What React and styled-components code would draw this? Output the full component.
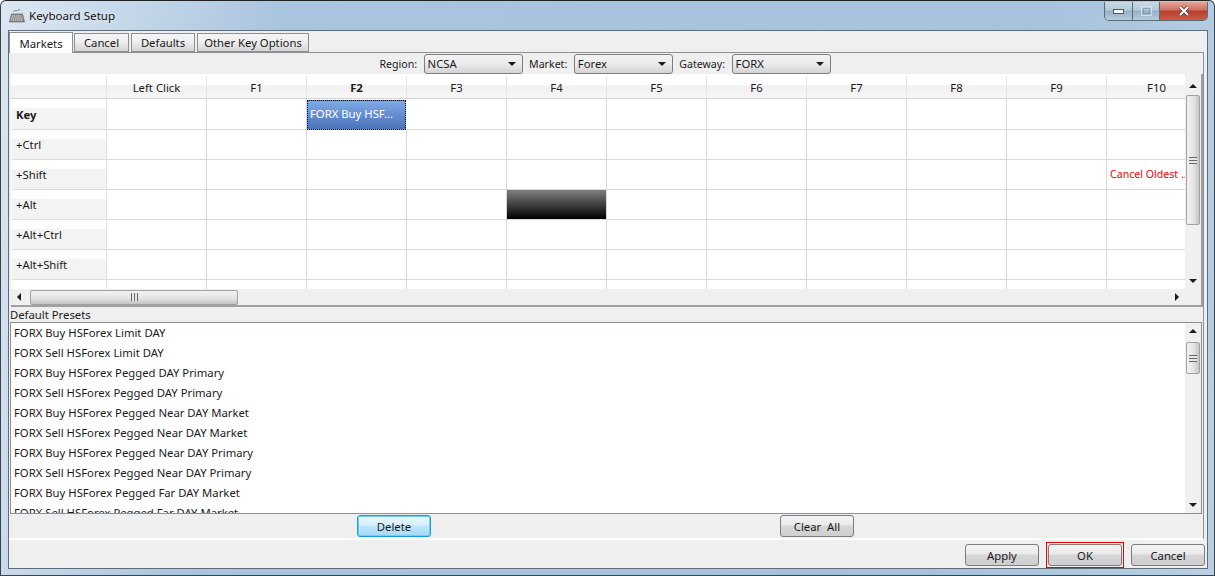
import React from 'react';
import styled, { createGlobalStyle } from 'styled-components';

const columns = ['Left Click', 'F1', 'F2', 'F3', 'F4', 'F5', 'F6', 'F7', 'F8', 'F9', 'F10'];
const rowKeys = ['Key', '+Ctrl', '+Shift', '+Alt', '+Alt+Ctrl', '+Alt+Shift', ''];
const presets = [
  'FORX Buy HSForex Limit DAY',
  'FORX Sell HSForex Limit DAY',
  'FORX Buy HSForex Pegged DAY Primary',
  'FORX Sell HSForex Pegged DAY Primary',
  'FORX Buy HSForex Pegged Near DAY Market',
  'FORX Sell HSForex Pegged Near DAY Market',
  'FORX Buy HSForex Pegged Near DAY Primary',
  'FORX Sell HSForex Pegged Near DAY Primary',
  'FORX Buy HSForex Pegged Far DAY Market',
  'FORX Sell HSForex Pegged Far DAY Market',
];

const GlobalStyle = createGlobalStyle`
  html, body {
    margin: 0;
    padding: 0;
    overflow: hidden;
    background: #fff;
  }
  * { box-sizing: border-box; }
`;

const Window = styled.div`
  width: 1215px;
  height: 576px;
  display: flex;
  flex-direction: column;
  overflow: hidden;
  padding: 0 6px 6px 7px;
  border: 1px solid #3c4248;
  border-top-color: #1e2226;
  border-radius: 6px 6px 0 0;
  background: linear-gradient(100deg, #dbe7f2 0, #a9c4de 22%, #a6c2dd 78%, #b9d0e5 100%);
  font-family: 'Noto Sans', 'Liberation Sans', sans-serif;
  font-size: 11.3px;
  color: #1a1a1a;
`;

const TitleBar = styled.div`
  height: 29px;
  flex: none;
  display: flex;
  align-items: flex-start;
  padding-left: 1px;
`;

const TitleIcon = styled.svg`
  width: 16px;
  height: 16px;
  margin: 7px 4px 0 0;
`;

const TitleText = styled.div`
  margin-top: 6px;
  font-size: 11.6px;
  line-height: 18px;
  color: #111;
  text-shadow: 0 0 6px #fff;
`;

const WindowControls = styled.div`
  margin-left: auto;
  height: 19px;
  margin-top: 1px;
  display: flex;
  border: 1px solid #5d6a78;
  border-top: 0;
  border-radius: 0 0 5px 5px;
  overflow: hidden;
`;

const ControlButton = styled.div`
  width: ${p => p.$w}px;
  display: flex;
  align-items: center;
  justify-content: center;
  border-right: ${p => (p.$last ? 0 : '1px solid #5d6a78')};
  background: ${p =>
    p.$close
      ? 'linear-gradient(#e0a69b 0, #cf6e5e 45%, #b83d2c 50%, #cc5a48 100%)'
      : 'linear-gradient(#c9d9e8 0, #b4c9dc 45%, #98b0c6 50%, #b6cbdd 100%)'};
`;

const Frame = styled.div`
  flex: 1;
  min-height: 0;
  display: flex;
  flex-direction: column;
  background: #efefef;
  border: 1px solid #5f6c7a;
`;

const TabStrip = styled.div`
  height: 21px;
  flex: none;
  display: flex;
  align-items: flex-end;
  position: relative;
  z-index: 1;
`;

const Tab = styled.div`
  height: ${p => (p.$active ? 21 : 19)}px;
  width: ${p => p.$w}px;
  margin-right: ${p => (p.$active ? 1 : 2)}px;
  margin-bottom: ${p => (p.$active ? -1 : 0)}px;
  display: flex;
  align-items: center;
  justify-content: center;
  font-size: 11.3px;
  border: 1px solid #8c9094;
  border-bottom: ${p => (p.$active ? '0' : '1px solid #8c9094')};
  background: ${p => (p.$active ? '#fff' : 'linear-gradient(#f4f4f4, #f0f0f0 40%, #d5d5d5)')};
`;

const Panel = styled.div`
  flex: 1;
  min-height: 0;
  display: flex;
  flex-direction: column;
  margin-right: 3px;
  border: 1px solid #8c9094;
  border-left: 0;
  border-bottom: 2px solid #fff;
`;

const FilterBar = styled.div`
  height: 21px;
  flex: none;
  display: flex;
  justify-content: center;
  align-items: center;
  gap: 6.5px;
  padding-right: 2px;
  background: #efefef;
`;

const FieldLabel = styled.span`
  font-size: 10.6px;
`;

const Combo = styled.div`
  width: 99px;
  height: 20px;
  display: flex;
  align-items: center;
  justify-content: space-between;
  padding: 0 6px 0 3px;
  border: 1px solid #7d7d7d;
  border-radius: 3px;
  background: linear-gradient(#f2f2f2, #ececec 45%, #d4d4d4);
  font-size: 11.3px;
`;

const Arrow = styled.span`
  width: 0;
  height: 0;
  border-left: ${p => p.$size || 4}px solid transparent;
  border-right: ${p => p.$size || 4}px solid transparent;
  border-top: ${p => p.$size || 4}px solid #1c1c1c;
  transform: rotate(${p => p.$turn || 0}deg);
`;

const KeyGridBox = styled.div`
  height: 233px;
  flex: none;
  display: flex;
  flex-direction: column;
  border-bottom: 2px solid #a0a0a0;
  border-right: 2px solid #a0a0a0;
  margin-left: 2px;
  background: #f0f0f0;
`;

const KeyGridTop = styled.div`
  flex: 1;
  min-height: 0;
  display: flex;
`;

const Viewport = styled.div`
  flex: 1;
  min-width: 0;
  overflow: hidden;
  background: #fff;
`;

const Row = styled.div`
  display: grid;
  grid-template-columns: 96px repeat(11, 100px);
  height: ${p => p.$h}px;
`;

const HeadCell = styled.div`
  display: flex;
  align-items: center;
  justify-content: center;
  font-size: 11.3px;
  font-weight: ${p => (p.$bold ? 700 : 400)};
  border-right: 1px solid #e4e4e4;
  border-bottom: 1px solid #d4d4d4;
  background: linear-gradient(#fff 0, #fff 40%, #f0f0f0 45%, #f6f6f6 100%);
  margin-top: 2px;
`;

const KeyCell = styled.div`
  display: flex;
  align-items: center;
  padding-left: 4px;
  margin-left: 1px;
  font-size: 11.3px;
  font-weight: ${p => (p.$bold ? 700 : 400)};
  border-right: 1px solid #e4e4e4;
  border-bottom: 1px solid #dedede;
  background: linear-gradient(#fff 0, #fff 30%, #f3f3f3 32%, #f3f3f3 100%);
`;

const Cell = styled.div`
  border-right: 1px solid #d9d9d9;
  border-bottom: 1px solid #d9d9d9;
  background: #fff;
  display: flex;
  align-items: center;
  overflow: hidden;
  white-space: nowrap;
  font-size: ${p => (p.$red ? 10.6 : 11.3)}px;
  padding: 0 3px 2px;
  color: ${p => (p.$red ? '#f00000' : '#1a1a1a')};
`;

const PresetCell = styled(Cell)`
  color: #fff;
  margin: 1px 1px 0 0;
  padding: 0 2px 3px;
  border: 1px dotted #111;
  background: linear-gradient(#7fa9e8, #4a72b8);
`;

const DarkCell = styled(Cell)`
  background: linear-gradient(#808080, #000);
`;

const VScroll = styled.div`
  width: 16px;
  flex: none;
  display: flex;
  flex-direction: column;
  background: #f0f0f0;
`;

const ScrollEnd = styled.div`
  flex: none;
  width: ${p => p.$w || '16px'};
  height: ${p => p.$h || '16px'};
  padding-top: ${p => p.$pad || 0}px;
  display: flex;
  align-items: center;
  justify-content: center;
`;

const VThumb = styled.div`
  height: ${p => p.$h}px;
  flex: none;
  margin: ${p => p.$top}px 1px 0;
  border: 1px solid #a2a2a2;
  border-radius: 2px;
  background: linear-gradient(90deg, #f2f2f2, #e4e4e4 55%, #c4c4c4);
  display: flex;
  align-items: center;
  justify-content: center;
`;

const ThumbGrip = styled.div`
  width: ${p => (p.$horizontal ? 7 : 8)}px;
  height: ${p => (p.$horizontal ? 8 : 7)}px;
  background: ${p =>
    p.$horizontal
      ? 'repeating-linear-gradient(90deg, #666 0 1px, #e8e8e8 1px 3px)'
      : 'repeating-linear-gradient(#666 0 1px, #e8e8e8 1px 3px)'};
`;

const Spacer = styled.div`
  flex: 1;
`;

const HScroll = styled.div`
  height: 16px;
  flex: none;
  display: flex;
  align-items: center;
  background: #f0f0f0;
`;

const HThumb = styled.div`
  width: 208px;
  height: 15px;
  flex: none;
  margin-left: 3px;
  border: 1px solid #a2a2a2;
  border-radius: 2px;
  background: linear-gradient(#f2f2f2, #e4e4e4 55%, #c4c4c4);
  display: flex;
  align-items: center;
  justify-content: center;
`;

const SectionLabel = styled.div`
  height: 15px;
  flex: none;
  line-height: 15px;
  font-size: 11.3px;
  margin-left: 1px;
`;

const ListBox = styled.div`
  height: 192px;
  flex: none;
  display: flex;
  margin-left: 1px;
  margin-right: 1px;
  border: 1px solid #8c9094;
  background: #fff;
`;

const PresetList = styled.div`
  flex: 1;
  min-width: 0;
  overflow: hidden;
  padding: 0 3px;
`;

const PresetItem = styled.div`
  height: 20px;
  line-height: 19px;
  font-size: 11.3px;
  white-space: nowrap;
`;

const ActionRow = styled.div`
  flex: 1;
  display: flex;
  justify-content: center;
  align-items: center;
  gap: 349px;
  padding-right: 1px;
`;

const Button = styled.div`
  width: 74px;
  height: 22px;
  display: flex;
  align-items: center;
  justify-content: center;
  font-size: 11.3px;
  white-space: pre;
  border: 1px solid ${p => (p.$focus ? '#1b9ad6' : '#7d7d7d')};
  border-radius: 3px;
  box-shadow: ${p => (p.$focus ? 'inset 0 0 0 1px #6fd0f5' : 'none')};
  background: ${p =>
    p.$focus
      ? 'linear-gradient(#eaf6fd, #d9f0fc 45%, #bee6fd 50%, #a7d9f5)'
      : 'linear-gradient(#f2f2f2, #ebebeb 45%, #d6d6d6 50%, #cfcfcf)'};
`;

const Footer = styled.div`
  height: 28px;
  flex: none;
  display: flex;
  justify-content: flex-end;
  align-items: center;
  padding-top: 2px;
`;

const FooterSlot = styled.div`
  margin-left: ${p => p.$gap}px;
  padding: 1px;
  border: 1px solid ${p => (p.$marked ? '#f00000' : 'transparent')};
`;

function Keyboard() {
  return (
    <TitleIcon viewBox="0 0 16 16">
      <path d="M4 4 C6 1.5 8 3.5 11 1.5" fill="none" stroke="#8a8a8a" strokeWidth="1" />
      <path d="M2.5 6 H13.5 L15.5 14 H0.5 Z" fill="#8f8f8f" stroke="#555" strokeWidth="0.6" />
      <path d="M3 8 H13 M2.5 10 H13.5 M2 12 H14" stroke="#e2e2e2" strokeWidth="1" strokeDasharray="1 1" />
    </TitleIcon>
  );
}

function Minimize() {
  return (
    <svg width="11" height="5" viewBox="0 0 11 5">
      <rect x="0.5" y="0.5" width="10" height="4" fill="#fff" stroke="#4a5763" />
    </svg>
  );
}

function Maximize() {
  return (
    <svg width="11" height="10" viewBox="0 0 11 10" opacity="0.55">
      <rect x="0.5" y="0.5" width="10" height="9" fill="none" stroke="#f2f6fa" />
      <rect x="2.5" y="2.5" width="6" height="5" fill="none" stroke="#6c7f90" />
    </svg>
  );
}

function CloseMark() {
  return (
    <svg width="12" height="10" viewBox="0 0 12 10">
      <path d="M2 1 L10 9 M10 1 L2 9" stroke="#4f2a26" strokeWidth="3.4" />
      <path d="M2 1 L10 9 M10 1 L2 9" stroke="#fff" strokeWidth="2.2" />
    </svg>
  );
}

function KeyGrid() {
  return (
    <KeyGridBox>
      <KeyGridTop>
        <Viewport>
          <Row $h={25}>
            <HeadCell />
            {columns.map(c => (
              <HeadCell key={c} $bold={c === 'F2'}>{c}</HeadCell>
            ))}
          </Row>
          {rowKeys.map((k, r) => (
            <Row key={r} $h={r === 0 ? 31 : 30}>
              <KeyCell $bold={k === 'Key'}>{k}</KeyCell>
              {columns.map((c, i) => {
                if (r === 0 && c === 'F2') return <PresetCell key={c}>FORX Buy HSF...</PresetCell>;
                if (r === 3 && c === 'F4') return <DarkCell key={c} />;
                if (r === 2 && c === 'F10') return <Cell key={c} $red>Cancel Oldest ...</Cell>;
                return <Cell key={i} />;
              })}
            </Row>
          ))}
        </Viewport>
        <VScroll>
          <ScrollEnd $h="21px" $pad={2}><Arrow $turn={180} /></ScrollEnd>
          <VThumb $h={130} $top={0}><ThumbGrip /></VThumb>
          <Spacer />
          <ScrollEnd><Arrow /></ScrollEnd>
        </VScroll>
      </KeyGridTop>
      <HScroll>
        <ScrollEnd><Arrow $turn={90} /></ScrollEnd>
        <HThumb><ThumbGrip $horizontal /></HThumb>
        <Spacer />
        <ScrollEnd><Arrow $turn={-90} /></ScrollEnd>
        <ScrollEnd $w="16px" />
      </HScroll>
    </KeyGridBox>
  );
}

export default function App() {
  return (
    <>
      <GlobalStyle />
      <Window>
        <TitleBar>
          <Keyboard />
          <TitleText>Keyboard Setup</TitleText>
          <WindowControls>
            <ControlButton $w={28}><Minimize /></ControlButton>
            <ControlButton $w={27}><Maximize /></ControlButton>
            <ControlButton $w={47} $close $last><CloseMark /></ControlButton>
          </WindowControls>
        </TitleBar>
        <Frame>
          <TabStrip>
            <Tab $active $w={64}>Markets</Tab>
            <Tab $w={55}>Cancel</Tab>
            <Tab $w={64}>Defaults</Tab>
            <Tab $w={112}>Other Key Options</Tab>
          </TabStrip>
          <Panel>
            <FilterBar>
              <FieldLabel>Region:</FieldLabel>
              <Combo>NCSA<Arrow /></Combo>
              <FieldLabel>Market:</FieldLabel>
              <Combo>Forex<Arrow /></Combo>
              <FieldLabel>Gateway:</FieldLabel>
              <Combo>FORX<Arrow /></Combo>
            </FilterBar>
            <KeyGrid />
            <SectionLabel>Default Presets</SectionLabel>
            <ListBox>
              <PresetList>
                {presets.map(p => <PresetItem key={p}>{p}</PresetItem>)}
              </PresetList>
              <VScroll>
                <ScrollEnd><Arrow $turn={180} /></ScrollEnd>
                <VThumb $h={32} $top={3}><ThumbGrip /></VThumb>
                <Spacer />
                <ScrollEnd><Arrow /></ScrollEnd>
              </VScroll>
            </ListBox>
            <ActionRow>
              <Button $focus>Delete</Button>
              <Button>Clear  All</Button>
            </ActionRow>
          </Panel>
          <Footer>
            <FooterSlot $gap={0}><Button>Apply</Button></FooterSlot>
            <FooterSlot $gap={5} $marked><Button>OK</Button></FooterSlot>
            <FooterSlot $gap={5}><Button>Cancel</Button></FooterSlot>
          </Footer>
        </Frame>
      </Window>
    </>
  );
}
